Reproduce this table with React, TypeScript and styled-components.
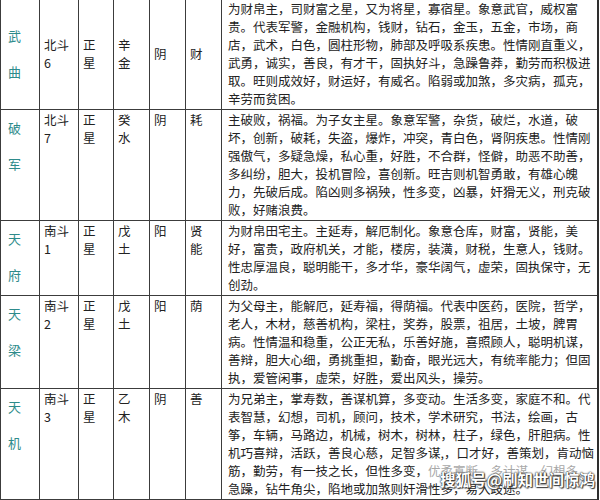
import React from "react";
import styled, { createGlobalStyle } from "styled-components";

type Align = "top" | "middle";

type Star = {
    name: [string, string];
    dou: string[];
    kind: string[];
    element: string[];
    yinYang: string;
    transform: string[];
    lines: React.ReactNode[];
    align: Align;
};

const GlobalStyle = createGlobalStyle`
    html, body {
        margin: 0;
        padding: 0;
        background: #ffffff;
    }
    body {
        font-family: "Noto Sans CJK SC", "Noto Sans", sans-serif;
    }
`;

const Faded = styled.span`
    color: #a8a8a8;
`;

const stars: Star[] = [
    {
        name: ["武", "曲"],
        dou: ["北斗", "6"],
        kind: ["正", "星"],
        element: ["辛", "金"],
        yinYang: "阴",
        transform: ["财"],
        align: "middle",
        lines: [
            "为财帛主，司财富之星，又为将星，寡宿星。象意武官，威权富",
            "贵。代表军警，金融机构，钱财，钻石，金玉，五金，市场，商",
            "店，武术，白色，圆柱形物，肺部及呼吸系疾患。性情刚直重义，",
            "武勇，诚实，善良，有才干，固执好斗，急躁鲁莽，勤劳而积极进",
            "取。旺则成效好，财运好，有威名。陷弱或加煞，多灾病，孤克，",
            "辛劳而贫困。",
        ],
    },
    {
        name: ["破", "军"],
        dou: ["北斗", "7"],
        kind: ["正", "星"],
        element: ["癸", "水"],
        yinYang: "阴",
        transform: ["耗"],
        align: "top",
        lines: [
            "主破败，祸福。为子女主星。象意军警，杂货，破烂，水道，破",
            "坏，创新，破耗，失盗，爆炸，冲突，青白色，肾阴疾患。性情刚",
            "强傲气，多疑急燥，私心重，好胜，不合群，怪僻，助恶不助善，",
            "多纠纷，胆大，投机冒险，喜创新。旺吉则机智勇敢，有雄心魄",
            "力，先破后成。陷凶则多祸殃，性多变，凶暴，奸猾无义，刑克破",
            "败，好赌浪费。",
        ],
    },
    {
        name: ["天", "府"],
        dou: ["南斗", "1"],
        kind: ["正", "星"],
        element: ["戊", "土"],
        yinYang: "阳",
        transform: ["贤", "能"],
        align: "top",
        lines: [
            "为财帛田宅主。主延寿，解厄制化。象意仓库，财富，贤能，美",
            "好，富贵，政府机关，才能，楼房，装潢，财税，生意人，钱财。",
            "性忠厚温良，聪明能干，多才华，豪华阔气，虚荣，固执保守，无",
            "创劲。",
        ],
    },
    {
        name: ["天", "梁"],
        dou: ["南斗", "2"],
        kind: ["正", "星"],
        element: ["戊", "土"],
        yinYang: "阳",
        transform: ["荫"],
        align: "top",
        lines: [
            "为父母主，能解厄，延寿福，得荫福。代表中医药，医院，哲学，",
            "老人，木材，慈善机构，梁柱，奖券，股票，祖居，土坡，脾胃",
            "病。性情温和稳重，公正无私，乐善好施，喜照顾人，聪明机谋，",
            "善辩，胆大心细，勇挑重担，勤奋，眼光远大，有统率能力；但固",
            "执，爱管闲事，虚荣，好胜，爱出风头，操劳。",
        ],
    },
    {
        name: ["天", "机"],
        dou: ["南斗", "3"],
        kind: ["正", "星"],
        element: ["乙", "木"],
        yinYang: "阴",
        transform: ["善"],
        align: "top",
        lines: [
            "为兄弟主，掌寿数，善谋机算，多变动。生活多变，家庭不和。代",
            "表智慧，幻想，司机，顾问，技术，学术研究，书法，绘画，古",
            "筝，车辆，马路边，机械，树木，树林，柱子，绿色，肝胆病。性",
            "机巧喜辩，活跃，善良心慈，足智多谋,，口才好，善策划，肯动恼",
            <>
                筋，勤劳，有一技之长，但性多变，<Faded>优柔寡断，多计谋，幻想多，</Faded>
            </>,
            "急躁，钻牛角尖，陷地或加煞则奸滑性多，易入歧途。",
        ],
    },
];

const StackedText: React.FunctionComponent<{ lines: string[] }> = ({ lines }) => (
    <>
        {lines.map((line, i) => (
            <Line key={i}>{line}</Line>
        ))}
    </>
);

export default function App() {
    return (
        <Page>
            <GlobalStyle />
            <Table>
                <colgroup>
                    <col style={{ width: 39 }} />
                    <col style={{ width: 39 }} />
                    <col style={{ width: 35 }} />
                    <col style={{ width: 36 }} />
                    <col style={{ width: 36 }} />
                    <col style={{ width: 36 }} />
                    <col />
                </colgroup>
                <tbody>
                    {stars.map(star => (
                        <tr key={star.name.join("")}>
                            <NameCell $valign={star.align}>
                                <NameChar>{star.name[0]}</NameChar>
                                <NameChar>{star.name[1]}</NameChar>
                            </NameCell>
                            <Cell $valign={star.align}>
                                <StackedText lines={star.dou} />
                            </Cell>
                            <Cell $valign={star.align}>
                                <StackedText lines={star.kind} />
                            </Cell>
                            <Cell $valign={star.align}>
                                <StackedText lines={star.element} />
                            </Cell>
                            <Cell $valign={star.align}>
                                <Line>{star.yinYang}</Line>
                            </Cell>
                            <Cell $valign={star.align}>
                                <StackedText lines={star.transform} />
                            </Cell>
                            <DescCell $valign="top">
                                {star.lines.map((line, i) => (
                                    <Line key={i}>{line}</Line>
                                ))}
                            </DescCell>
                        </tr>
                    ))}
                </tbody>
            </Table>
            <Watermark>搜狐号@刷知世间惊鸿</Watermark>
        </Page>
    );
}

const Page = styled.div`
    position: relative;
    width: 600px;
    height: 500px;
    overflow: hidden;
    background: #ffffff;
`;

const Table = styled.table`
    width: 599px;
    margin-top: -2px;
    border-collapse: collapse;
    table-layout: fixed;
    border-left: 1px solid #2e2e2e;
    border-right: 2px solid #2e2e2e;
`;

const Cell = styled.td<{ $valign: Align }>`
    border: 1px solid #3c3c3c;
    padding: 1px 4px;
    vertical-align: ${props => props.$valign};
    font-size: 12.5px;
    line-height: 18px;
    color: #222222;
    overflow: visible;
`;

const NameCell = styled(Cell)`
    padding: ${props => (props.$valign === "top" ? "9px 4px 1px 7px" : "1px 4px 1px 7px")};
    color: #2e8b8b;
    font-size: 13px;
`;

const NameChar = styled.div`
    line-height: 18px;

    & + & {
        margin-top: 18px;
    }
`;

const DescCell = styled(Cell)`
    padding: 1px 4px 1px 6px;
`;

const Line = styled.div`
    white-space: nowrap;
`;

const Watermark = styled.div`
    position: absolute;
    left: 440px;
    top: 472px;
    font-size: 15.5px;
    line-height: 1;
    font-weight: 700;
    color: #ffffff;
    white-space: nowrap;
    text-shadow: 0 0 1px #222222, 0 0 2px #333333, 1px 1px 1px #444444;
`;
